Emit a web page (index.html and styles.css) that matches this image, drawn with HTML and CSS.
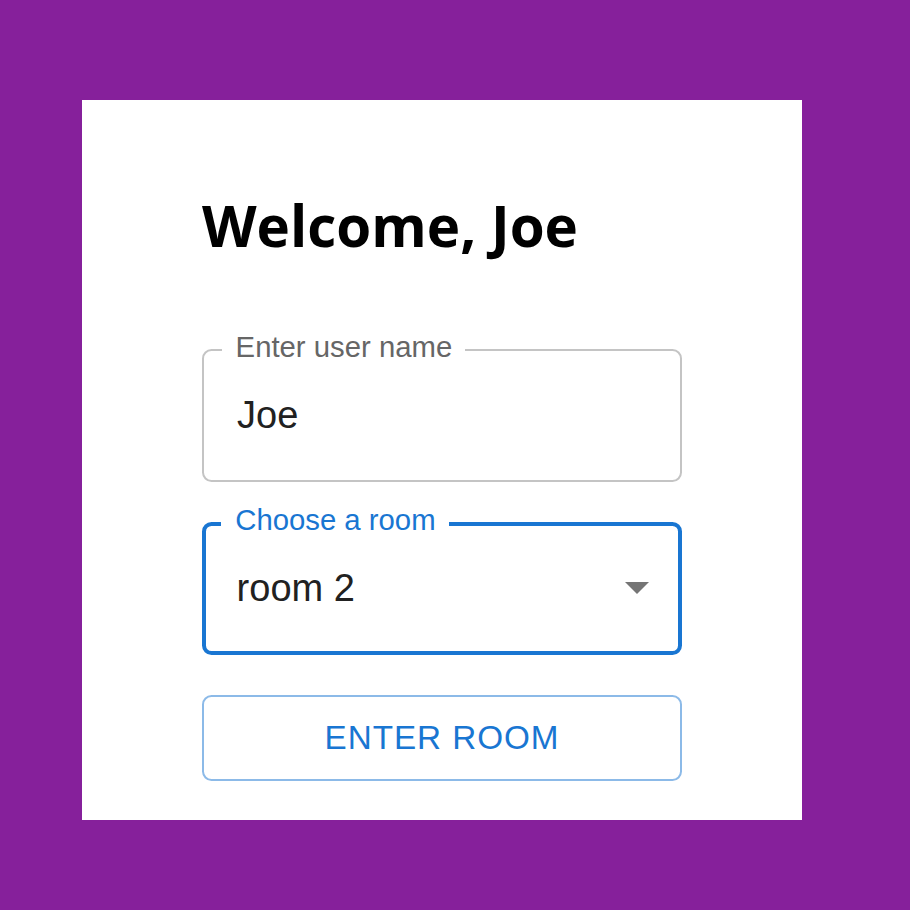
FILE: index.html
```html
<!DOCTYPE html>
<html lang="en">
<head>
<meta charset="utf-8">
<title>Welcome</title>
<link rel="stylesheet" href="styles.css">
</head>
<body>
<div class="card">
  <h1 class="title">Welcome, Joe</h1>
  <div class="field">
    <span class="field-label">Enter user name</span>
    <span class="field-value">Joe</span>
  </div>
  <div class="field field-focused">
    <span class="field-label">Choose a room</span>
    <span class="field-value">room 2</span>
    <svg class="arrow" width="24" height="12" viewBox="0 0 24 12"><path d="M0 0 L24 0 L12 12 Z" fill="#757575"/></svg>
  </div>
  <button class="enter-btn">Enter room</button>
</div>
</body>
</html>
```
FILE: styles.css
```css
html, body {
  margin: 0;
  padding: 0;
}
body {
  background: #86209b;
  width: 910px;
  height: 910px;
  overflow: hidden;
}
.card {
  box-sizing: border-box;
  width: 720px;
  height: 720px;
  margin: 100px 0 0 82px;
  background: #ffffff;
  padding: 92px 120px 0;
  display: flex;
  flex-direction: column;
}
.title {
  margin: 0;
  font-family: "Open Sans", "Noto Sans", sans-serif;
  font-weight: 700;
  font-size: 56.5px;
  line-height: 1.2;
  color: #000;
}
.field {
  position: relative;
  box-sizing: border-box;
  height: 133px;
  margin-top: 89px;
  border: 2.4px solid #c4c4c4;
  border-radius: 9.5px;
  display: flex;
  align-items: center;
  padding: 0 33px;
  font-family: "Liberation Sans", Arial, sans-serif;
  font-size: 38px;
  color: #212121;
}
.field + .field {
  margin-top: 40px;
}
.field-label {
  position: absolute;
  top: -4.3px;
  left: 17.6px;
  transform: translateY(-50%);
  padding: 0 13px 0 14px;
  background: #ffffff;
  font-size: 29.3px;
  line-height: 1;
  color: #666666;
}
.field-focused {
  border: 4.75px solid #1976d2;
  padding: 0 29px 0 30.6px;
}
.field-focused .field-label {
  color: #1976d2;
  top: -5.5px;
  left: 15.25px;
}
.field-value {
  line-height: 1.2;
}
.arrow {
  margin-left: auto;
  display: block;
}
.enter-btn {
  box-sizing: border-box;
  margin-top: 40px;
  height: 86px;
  width: 100%;
  background: #ffffff;
  border: 2.4px solid #8cbae8;
  border-radius: 9.5px;
  font-family: "Liberation Sans", Arial, sans-serif;
  font-size: 33.25px;
  letter-spacing: 0.95px;
  text-transform: uppercase;
  color: #1976d2;
  padding: 0;
  cursor: pointer;
}
```
